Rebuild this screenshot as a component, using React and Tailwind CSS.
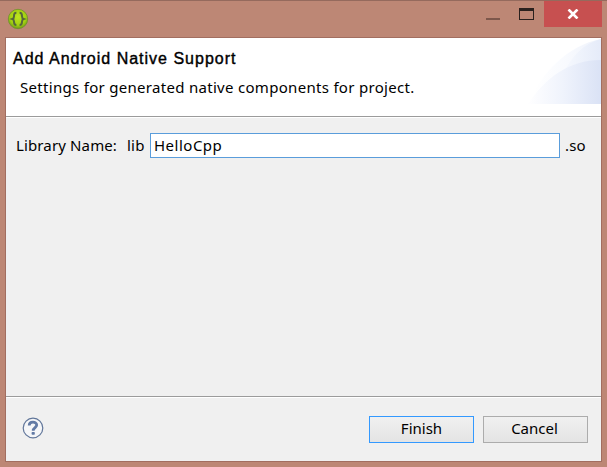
const uiFont = "font-['Noto_Sans','Open_Sans',sans-serif]";

function AppIcon() {
  return (
    <svg width="22" height="22" viewBox="0 0 22 22" className="block">
      <defs>
        <radialGradient id="ball" cx="0.5" cy="0.4" r="0.6">
          <stop offset="0" stopColor="#bfe420" />
          <stop offset="0.7" stopColor="#a2d010" />
          <stop offset="1" stopColor="#6b9a18" />
        </radialGradient>
      </defs>
      <circle cx="11" cy="11" r="9.7" fill="url(#ball)" stroke="#6f8f2c" strokeWidth="0.8" />
      <path d="M9.4 4.8C7.4 4.8 7 6.3 7 8.2C7 10 6.6 10.6 5.4 11C6.6 11.4 7 12 7 13.8C7 15.7 7.4 17 9.4 17" fill="none" stroke="#56663c" strokeWidth="2" />
      <path d="M12.6 4.8C14.6 4.8 15 6.3 15 8.2C15 10 15.4 10.6 16.6 11C15.4 11.4 15 12 15 13.8C15 15.7 14.6 17 12.6 17" fill="none" stroke="#56663c" strokeWidth="2" />
    </svg>
  );
}

function TitleBar() {
  return (
    <div className="flex h-[36px] items-start pr-[5px] pl-[7px]">
      <div className="pt-[7px]"><AppIcon /></div>
      <div className="ml-auto flex">
        <div className="mt-[17px] h-[2px] w-[14px] bg-[#7d574b]" />
        <div className="mt-[7px] mr-[10px] ml-[19px] h-[12px] w-[15px] border border-t-[3px] border-[#2b211e]" />
        <div className="flex h-[26px] w-[58px] items-center justify-center bg-[#c75050]">
          <svg width="12" height="10" viewBox="0 0 12 10" className="-mt-px -ml-px">
            <path d="M1.5 0.5L10.5 9.5M10.5 0.5L1.5 9.5" stroke="#fff" strokeWidth="2.6" />
          </svg>
        </div>
      </div>
    </div>
  );
}

function BannerArt() {
  return (
    <svg width="75" height="66" viewBox="0 0 75 66" className="block shrink-0">
      <defs>
        <linearGradient id="outer" x1="0" x2="75" y1="0" y2="0" gradientUnits="userSpaceOnUse">
          <stop offset="0.1" stopColor="#ffffff" />
          <stop offset="0.55" stopColor="#f8fafe" />
          <stop offset="1" stopColor="#eef2fb" />
        </linearGradient>
        <linearGradient id="upper" x1="38" x2="75" y1="0" y2="0" gradientUnits="userSpaceOnUse">
          <stop offset="0" stopColor="#f6f9fe" />
          <stop offset="1" stopColor="#e5ebf9" />
        </linearGradient>
        <linearGradient id="lower" x1="0" x2="75" y1="0" y2="0" gradientUnits="userSpaceOnUse">
          <stop offset="0.05" stopColor="#fefeff" />
          <stop offset="0.5" stopColor="#eff3fc" />
          <stop offset="1" stopColor="#dae2f5" />
        </linearGradient>
      </defs>
      <path d="M2 66C14 36 42 7 75 1V66Z" fill="url(#outer)" />
      <path d="M37 36C45 19 58 5 75 1V36Z" fill="url(#upper)" />
      <path d="M2 66C19 40 43 22 75 22V66Z" fill="url(#lower)" />
    </svg>
  );
}

function Header() {
  return (
    <header className="flex h-[79px] shrink-0 justify-between border-b border-[#9b9b9b] bg-white">
      <div className="whitespace-nowrap">
        <h1 className="mt-[11px] ml-[7px] font-['Liberation_Sans',Arial,sans-serif] text-[16px] leading-[20px] font-normal tracking-[1px] [-webkit-text-stroke:0.4px_#000]">
          Add Android Native Support
        </h1>
        <p className="mt-[8px] ml-[14px] text-[15px] leading-[20px] tracking-[0.3px]">
          Settings for generated native components for project.
        </p>
      </div>
      <BannerArt />
    </header>
  );
}

export default function App() {
  return (
    <div className={`h-[467px] w-[607px] border-t border-[#956a5d] bg-[#bd8775] text-black ${uiFont}`}>
      <TitleBar />
      <div className="ml-[5px] flex h-[425px] w-[597px] flex-col border border-[#a26e60] bg-[#f0f0f0]">
        <Header />
        <main className="flex h-[279px] shrink-0 items-start border-t border-white pt-[15px] pl-[10px] text-[15px] leading-[24px] whitespace-nowrap">
          <span className="w-[111px] tracking-[0.13px]">Library Name:</span>
          <span className="w-[23px] tracking-[0.2px]">lib</span>
          <input
            defaultValue="HelloCpp"
            className="h-[25px] w-[410px] border border-[#5a9ddb] bg-white px-[3px] pb-[2px] text-[15px] tracking-[0.5px] outline-none"
          />
          <span className="ml-[5px] tracking-[0.2px]">.so</span>
        </main>
        <footer className="flex flex-1 items-start border-t border-[#9b9b9b] shadow-[inset_0_1px_0_#fff]">
          <svg width="22" height="22" viewBox="0 0 22 22" className="mt-[20px] ml-[16px]">
            <circle cx="11" cy="11" r="9.8" fill="#f5f6f8" stroke="#61769a" strokeWidth="1.2" />
            <path d="M7.2 8.6C7.2 4 14.7 4.1 14.7 8.1C14.7 10.6 11.2 10.6 11.2 13.7" fill="none" stroke="#627aa5" strokeWidth="2.8" />
            <rect x="9.6" y="15" width="3.2" height="2.8" rx="0.8" fill="#627aa5" />
          </svg>
          <div className="mt-[19px] mr-[13px] ml-auto flex gap-[9px] text-[15px]">
            <button className="h-[27px] w-[105px] border border-solid border-[#3399ff] bg-linear-to-b from-[#f0f0f0] to-[#e4e4e4] pb-[2px] leading-[23px]">Finish</button>
            <button className="h-[27px] w-[105px] border border-solid border-[#acacac] bg-linear-to-b from-[#f0f0f0] to-[#e4e4e4] pr-[2px] pb-[2px] leading-[23px]">Cancel</button>
          </div>
        </footer>
      </div>
    </div>
  );
}
